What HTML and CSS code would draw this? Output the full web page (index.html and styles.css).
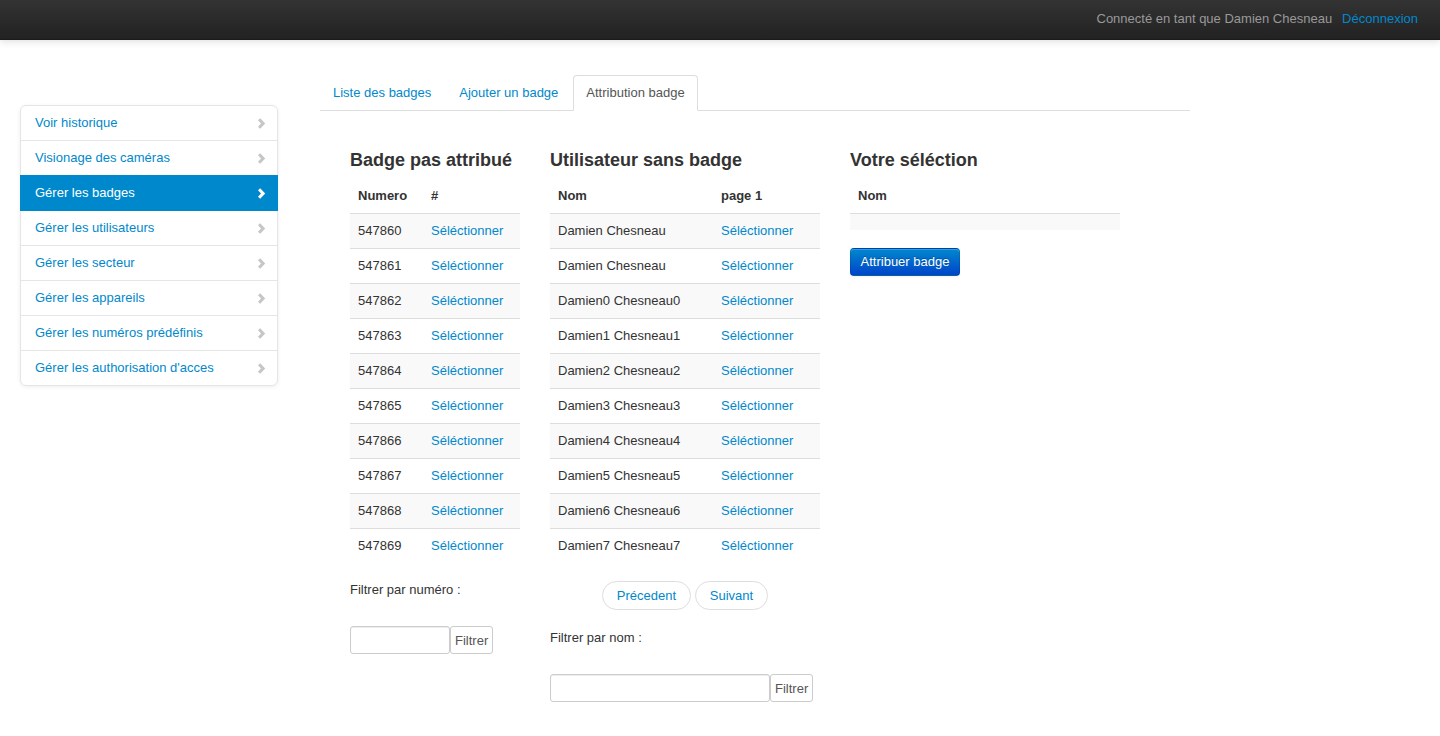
FILE: index.html
```html
<!DOCTYPE html>
<html lang="fr">
<head>
<meta charset="utf-8">
<title>Attribution badge</title>
<link rel="stylesheet" href="styles.css">
</head>
<body>
<header class="navbar">
  <span class="navbar-user">Connecté en tant que Damien Chesneau</span>
  <a class="navbar-link" href="#">Déconnexion</a>
</header>
<div class="layout">
  <aside class="sidebar">
    <ul class="sidenav">
      <li><a href="#">Voir historique<svg class="chev" viewBox="0 0 9 11"><polygon points="1,2.3 3.2,0.3 8.2,5.5 3.2,10.7 1,8.7 4,5.5"/></svg></a></li>
      <li><a href="#">Visionage des caméras<svg class="chev" viewBox="0 0 9 11"><polygon points="1,2.3 3.2,0.3 8.2,5.5 3.2,10.7 1,8.7 4,5.5"/></svg></a></li>
      <li class="active"><a href="#">Gérer les badges<svg class="chev" viewBox="0 0 9 11"><polygon points="1,2.3 3.2,0.3 8.2,5.5 3.2,10.7 1,8.7 4,5.5"/></svg></a></li>
      <li><a href="#">Gérer les utilisateurs<svg class="chev" viewBox="0 0 9 11"><polygon points="1,2.3 3.2,0.3 8.2,5.5 3.2,10.7 1,8.7 4,5.5"/></svg></a></li>
      <li><a href="#">Gérer les secteur<svg class="chev" viewBox="0 0 9 11"><polygon points="1,2.3 3.2,0.3 8.2,5.5 3.2,10.7 1,8.7 4,5.5"/></svg></a></li>
      <li><a href="#">Gérer les appareils<svg class="chev" viewBox="0 0 9 11"><polygon points="1,2.3 3.2,0.3 8.2,5.5 3.2,10.7 1,8.7 4,5.5"/></svg></a></li>
      <li><a href="#">Gérer les numéros prédéfinis<svg class="chev" viewBox="0 0 9 11"><polygon points="1,2.3 3.2,0.3 8.2,5.5 3.2,10.7 1,8.7 4,5.5"/></svg></a></li>
      <li><a href="#">Gérer les authorisation d'acces<svg class="chev" viewBox="0 0 9 11"><polygon points="1,2.3 3.2,0.3 8.2,5.5 3.2,10.7 1,8.7 4,5.5"/></svg></a></li>
    </ul>
  </aside>
  <main class="main">
    <ul class="tabs">
      <li><a href="#">Liste des badges</a></li>
      <li><a href="#">Ajouter un badge</a></li>
      <li class="active"><a href="#">Attribution badge</a></li>
    </ul>
    <div class="tab-content">
      <section class="col col-badges">
        <h4>Badge pas attribué</h4>
        <table class="table">
          <thead><tr><th class="w-num">Numero</th><th>#</th></tr></thead>
          <tbody>
            <tr><td>547860</td><td><a href="#">Séléctionner</a></td></tr>
            <tr><td>547861</td><td><a href="#">Séléctionner</a></td></tr>
            <tr><td>547862</td><td><a href="#">Séléctionner</a></td></tr>
            <tr><td>547863</td><td><a href="#">Séléctionner</a></td></tr>
            <tr><td>547864</td><td><a href="#">Séléctionner</a></td></tr>
            <tr><td>547865</td><td><a href="#">Séléctionner</a></td></tr>
            <tr><td>547866</td><td><a href="#">Séléctionner</a></td></tr>
            <tr><td>547867</td><td><a href="#">Séléctionner</a></td></tr>
            <tr><td>547868</td><td><a href="#">Séléctionner</a></td></tr>
            <tr><td>547869</td><td><a href="#">Séléctionner</a></td></tr>
          </tbody>
        </table>
        <p class="filter-label first">Filtrer par numéro :</p>
        <div class="filter"><input class="input input-num" type="text"><button class="btn-filter">Filtrer</button></div>
      </section>
      <section class="col col-users">
        <h4>Utilisateur sans badge</h4>
        <table class="table">
          <thead><tr><th class="w-nom">Nom</th><th>page 1</th></tr></thead>
          <tbody>
            <tr><td>Damien Chesneau</td><td><a href="#">Séléctionner</a></td></tr>
            <tr><td>Damien Chesneau</td><td><a href="#">Séléctionner</a></td></tr>
            <tr><td>Damien0 Chesneau0</td><td><a href="#">Séléctionner</a></td></tr>
            <tr><td>Damien1 Chesneau1</td><td><a href="#">Séléctionner</a></td></tr>
            <tr><td>Damien2 Chesneau2</td><td><a href="#">Séléctionner</a></td></tr>
            <tr><td>Damien3 Chesneau3</td><td><a href="#">Séléctionner</a></td></tr>
            <tr><td>Damien4 Chesneau4</td><td><a href="#">Séléctionner</a></td></tr>
            <tr><td>Damien5 Chesneau5</td><td><a href="#">Séléctionner</a></td></tr>
            <tr><td>Damien6 Chesneau6</td><td><a href="#">Séléctionner</a></td></tr>
            <tr><td>Damien7 Chesneau7</td><td><a href="#">Séléctionner</a></td></tr>
          </tbody>
        </table>
        <div class="pager"><a href="#">Précedent</a> <a href="#">Suivant</a></div>
        <p class="filter-label">Filtrer par nom :</p>
        <div class="filter"><input class="input input-nom" type="text"><button class="btn-filter">Filtrer</button></div>
      </section>
      <section class="col col-selection">
        <h4>Votre séléction</h4>
        <table class="table">
          <thead><tr><th>Nom</th></tr></thead>
          <tbody><tr class="empty"><td></td></tr></tbody>
        </table>
        <button class="btn-primary">Attribuer badge</button>
      </section>
    </div>
  </main>
</div>
</body>
</html>
```

FILE: styles.css
```css
* { box-sizing: border-box; }
html, body { margin: 0; padding: 0; }
body {
  font-family: "Liberation Sans", Arial, sans-serif;
  font-size: 13px;
  line-height: 18px;
  color: #333;
  background: #fff;
}
a { color: #0088cc; text-decoration: none; }

.navbar {
  height: 40px;
  background: linear-gradient(to bottom, #333333, #222222);
  border-bottom: 1px solid #1a1a1a;
  box-shadow: 0 1px 8px rgba(0,0,0,.15);
  display: flex;
  align-items: center;
  justify-content: flex-end;
  padding: 0 22px 2px 0;
}
.navbar-user { color: #999; }
.navbar-link { color: #0088cc; margin-left: 10px; }

.layout {
  display: flex;
  align-items: flex-start;
  padding: 35px 0 0 20px;
}

.sidebar { width: 258px; margin-top: 30px; margin-right: 42px; flex: none; }
.sidenav {
  list-style: none;
  margin: 0;
  padding: 0;
  background: #fff;
  border-radius: 6px;
  box-shadow: 0 1px 4px rgba(0,0,0,.07);
}
.sidenav li a {
  display: flex;
  align-items: center;
  justify-content: space-between;
  padding: 8px 11px 8px 14px;
  border: 1px solid #e5e5e5;
  margin-bottom: -1px;
  color: #0088cc;
}
.sidenav li:first-child a { border-radius: 6px 6px 0 0; }
.sidenav li:last-child a { border-radius: 0 0 6px 6px; }
.sidenav li.active a {
  background: #0088cc;
  border-color: #0088cc;
  color: #fff;
  position: relative;
}
.chev { width: 9px; height: 11px; fill: #c6c6c6; flex: none; }
.sidenav li.active .chev { fill: #fff; }

.main { width: 870px; flex: none; }

.tabs {
  list-style: none;
  margin: 0;
  padding: 0;
  display: flex;
  border-bottom: 1px solid #ddd;
}
.tabs li { margin-bottom: -1px; margin-right: 2px; }
.tabs li a {
  display: block;
  padding: 8px 12px;
  line-height: 18px;
  border: 1px solid transparent;
  border-radius: 4px 4px 0 0;
  color: #0088cc;
}
.tabs li.active a {
  color: #555;
  background: #fff;
  border-color: #ddd #ddd transparent;
}

.tab-content {
  display: flex;
  align-items: flex-start;
  gap: 30px;
  padding: 39px 30px 30px;
}
.col-badges { width: 170px; }
.col-users { width: 270px; }
.col-selection { width: 270px; }

h4 {
  margin: 0 0 9px;
  font-size: 18px;
  line-height: 20px;
  font-weight: bold;
  color: #333;
}

.table { width: 100%; border-collapse: collapse; border-spacing: 0; }
.table th, .table td {
  padding: 8px;
  line-height: 18px;
  text-align: left;
  vertical-align: top;
}
.table th { font-weight: bold; }
.table td { border-top: 1px solid #ddd; }
.table tbody tr:nth-child(odd) td { background: #f9f9f9; }
.w-num { width: 73px; }
.w-nom { width: 163px; }
.table tr.empty td { padding: 0; height: 16px; }

.filter-label { margin: 19px 0 0; }
.filter-label.first { margin-top: 18px; }
.filter { display: flex; margin-top: 27px; }
.input {
  height: 28px;
  border: 1px solid #ccc;
  border-radius: 3px;
  box-shadow: inset 0 1px 1px rgba(0,0,0,.075);
  padding: 4px 6px;
  font: inherit;
}
.input-num { width: 100px; }
.input-nom { width: 220px; }
.btn-filter {
  height: 28px;
  padding: 0 4px;
  border: 1px solid #ccc;
  border-radius: 3px;
  background: #fff;
  color: #555;
  font-family: inherit;
  font-size: 13px;
}

.pager { margin-top: 18px; text-align: center; }
.pager a {
  display: inline-block;
  padding: 5px 14px;
  line-height: 17px;
  border: 1px solid #ddd;
  border-radius: 15px;
  background: #fff;
}

.btn-primary {
  margin-top: 18px;
  height: 28px;
  width: 110px;
  padding: 0;
  font-family: inherit;
  font-size: 13px;
  color: #fff;
  text-shadow: 0 -1px 0 rgba(0,0,0,.25);
  background: linear-gradient(to bottom, #0088cc, #0044cc);
  border: 1px solid;
  border-color: rgba(0,0,0,.1) rgba(0,0,0,.1) rgba(0,0,0,.25);
  border-radius: 4px;
  box-shadow: inset 0 1px 0 rgba(255,255,255,.2), 0 1px 2px rgba(0,0,0,.05);
}
```
